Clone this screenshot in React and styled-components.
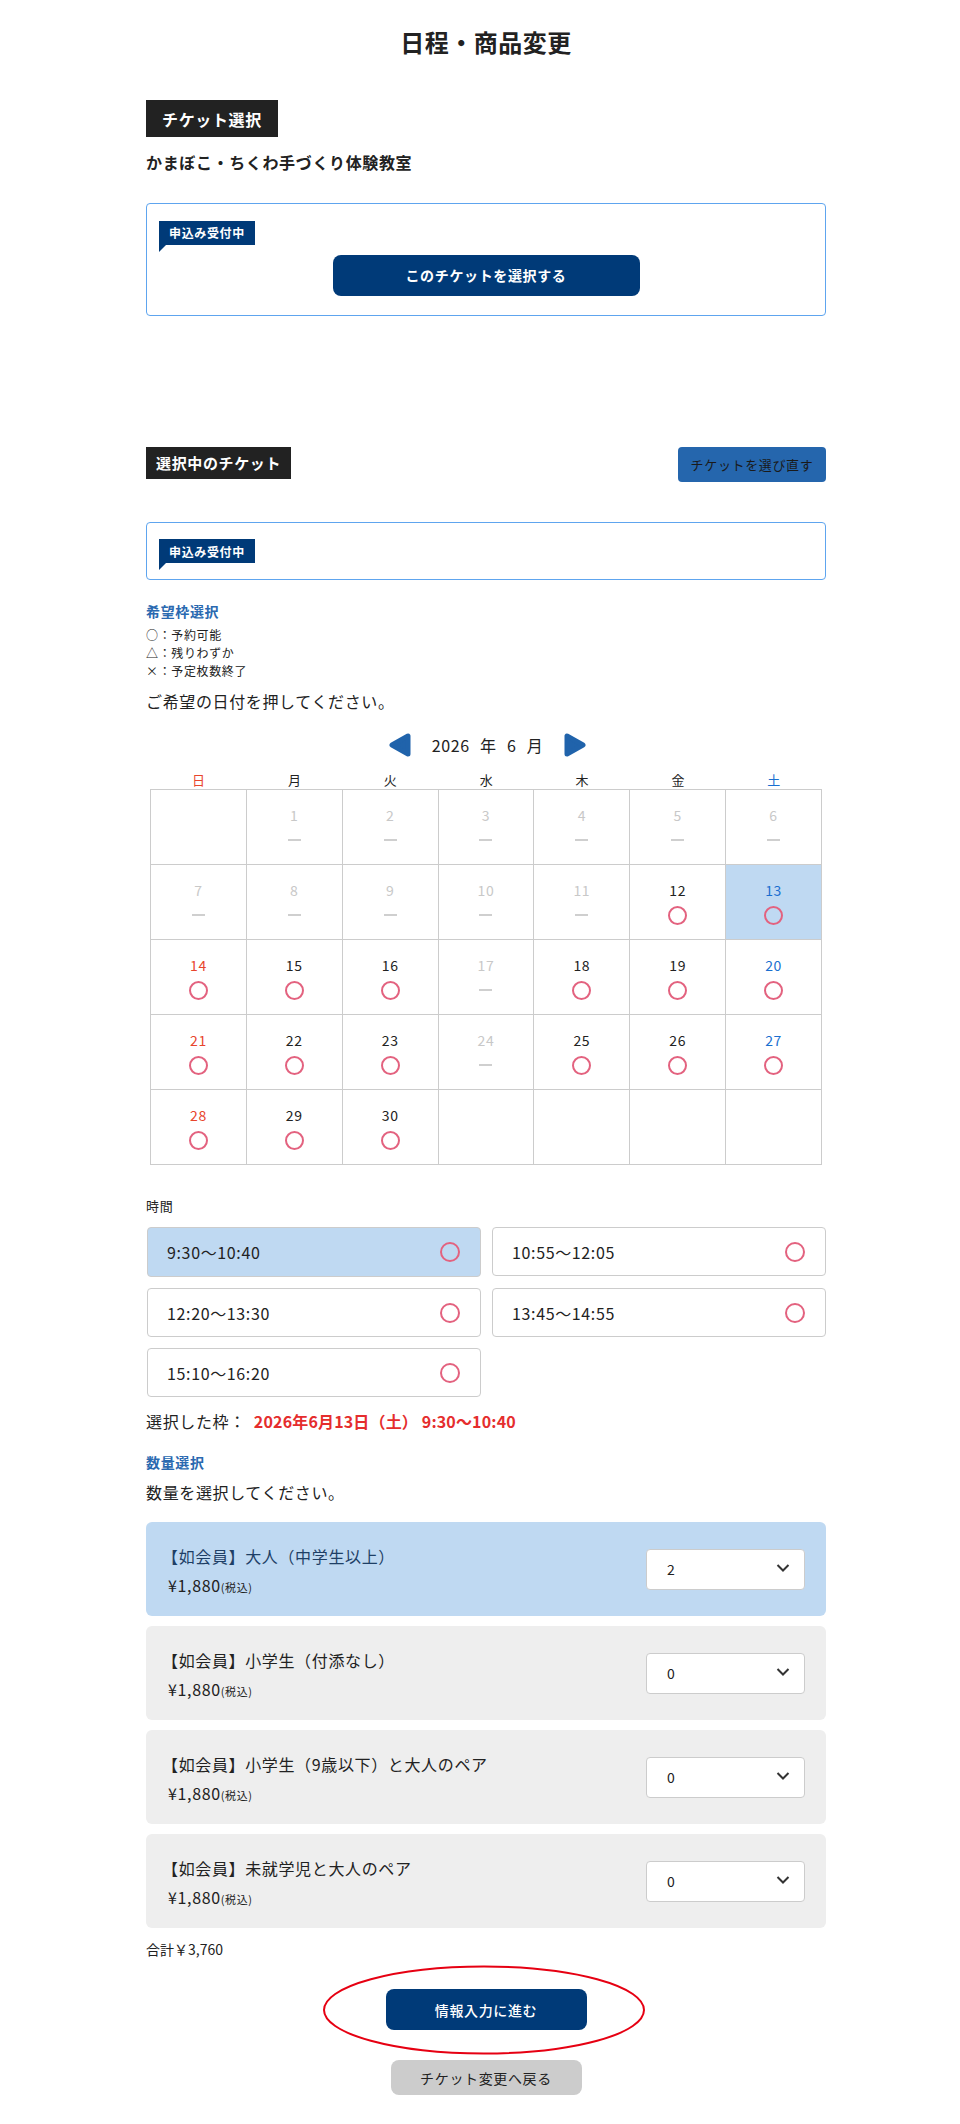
import React from "react";
import styled, { createGlobalStyle } from "styled-components";

const GlobalStyle = createGlobalStyle`
  html, body { margin: 0; padding: 0; background: #fff; }
  body {
    font-family: "Noto Sans CJK JP", "Noto Sans", sans-serif;
    color: #222;
    letter-spacing: 0.04em;
  }
  * { box-sizing: border-box; }
  button, select { letter-spacing: inherit; }
`;

const NAVY = "#003a78";
const SEL = "#bfd9f2";

const Page = styled.div`
  width: 960px;
  padding: 26px 134px 28px 146px;
`;

const Title = styled.h1`
  margin: 0;
  font-size: 24px;
  line-height: 32px;
  font-weight: 700;
  text-align: center;
  letter-spacing: 0.02em;
`;

const Label = styled.div`
  display: inline-flex;
  align-items: center;
  background: #222;
  color: #fff;
  font-weight: 700;
  height: ${(p) => (p.$small ? 32 : 37)}px;
  font-size: ${(p) => (p.$small ? 15 : 16)}px;
  padding: 0 ${(p) => (p.$small ? 10 : 16)}px;
`;

const TicketName = styled.div`
  margin-top: 13px;
  font-size: 16px;
  line-height: 24px;
  font-weight: 700;
`;

const TicketBox = styled.div`
  margin-top: ${(p) => p.$mt}px;
  border: 1px solid #5ea5ef;
  border-radius: 4px;
  padding: 15px 12px ${(p) => p.$pb}px;
`;

const Badge = styled.div`
  position: relative;
  display: inline-flex;
  align-items: center;
  height: 24px;
  padding: 0 10px;
  background: ${NAVY};
  color: #fff;
  font-size: 12px;
  font-weight: 700;
  &::after {
    content: "";
    position: absolute;
    left: 0;
    top: 24px;
    width: 0;
    height: 0;
    border-top: 7px solid ${NAVY};
    border-left: 7px solid transparent;
    transform: scaleX(-1);
  }
`;

const SelectTicketButton = styled.button`
  display: block;
  margin: 10px auto 0;
  width: 307px;
  height: 41px;
  border: none;
  border-radius: 8px;
  background: ${NAVY};
  color: #fff;
  font-family: inherit;
  font-size: 14px;
  font-weight: 700;
`;

const HeaderRow = styled.div`
  margin-top: 131px;
  display: flex;
  justify-content: space-between;
  align-items: flex-start;
`;

const ReselectButton = styled.button`
  width: 148px;
  height: 35px;
  border: none;
  border-radius: 4px;
  background: #2566ad;
  color: #1a1a1a;
  font-family: inherit;
  font-size: 13px;
  padding: 0;
`;

const SectionHead = styled.div`
  margin-top: ${(p) => p.$mt}px;
  font-size: 14px;
  line-height: 20px;
  font-weight: 700;
  color: #2a69b0;
`;

const Legend = styled.div`
  margin-top: 5px;
  font-size: 12px;
  line-height: 18px;
`;

const Lead = styled.div`
  margin-top: ${(p) => p.$mt}px;
  font-size: 16px;
  line-height: 24px;
`;

const MonthNav = styled.div`
  margin-top: 20px;
  height: 24px;
  display: flex;
  justify-content: center;
  align-items: center;
  gap: 21px;
  padding-left: 3px;
`;

const MonthText = styled.div`
  font-size: 16px;
  line-height: 24px;
  word-spacing: 6px;
`;

const Weekdays = styled.div`
  margin: 14px 4px 0;
  display: grid;
  grid-template-columns: repeat(7, 1fr);
  padding-left: 1px;
`;

const Weekday = styled.div`
  text-align: center;
  font-size: 13px;
  line-height: 18px;
  color: ${(p) => p.$color};
`;

const Grid = styled.div`
  margin: 0 4px;
  display: grid;
  grid-template-columns: repeat(7, 1fr);
  grid-auto-rows: 75px;
  border-top: 1px solid #ccc;
  border-left: 1px solid #ccc;
`;

const Cell = styled.div`
  border-right: 1px solid #ccc;
  border-bottom: 1px solid #ccc;
  background: ${(p) => (p.$selected ? SEL : "#fff")};
  display: flex;
  flex-direction: column;
  align-items: center;
  padding-top: 15px;
`;

const DayNum = styled.div`
  font-size: 14px;
  line-height: 20px;
  color: ${(p) => p.$color};
`;

const MarkSlot = styled.div`
  margin-top: 5px;
  height: 20px;
  display: flex;
  align-items: center;
  justify-content: center;
`;

const Circle = styled.div`
  width: ${(p) => p.$size || 19}px;
  height: ${(p) => p.$size || 19}px;
  border-radius: 50%;
  border: 2px solid #e3627f;
`;

const Dash = styled.div`
  width: 13px;
  height: 2px;
  background: #cfcfcf;
`;

const SmallHead = styled.div`
  margin-top: 32px;
  font-size: 13px;
  line-height: 18px;
`;

const Slots = styled.div`
  margin-top: 12px;
  display: grid;
  grid-template-columns: 1fr 1fr;
  gap: 11px;
  padding-left: 1px;
`;

const Slot = styled.div`
  height: ${(p) => (p.$tall ? 50 : 49)}px;
  border: 1px solid #ccc;
  border-radius: 4px;
  background: ${(p) => (p.$selected ? SEL : "#fff")};
  display: flex;
  align-items: center;
  justify-content: space-between;
  padding: 0 20px 0 19px;
  font-size: 16px;
`;

const Chosen = styled.div`
  margin-top: 12px;
  font-size: 16px;
  line-height: 24px;
`;

const ChosenValue = styled.span`
  margin-left: 8px;
  color: #e52d2d;
  font-weight: 700;
  letter-spacing: 0.01em;
`;

const Items = styled.div`
  margin-top: 18px;
  display: flex;
  flex-direction: column;
  gap: 10px;
`;

const Item = styled.div`
  height: 94px;
  border-radius: 6px;
  background: ${(p) => (p.$selected ? SEL : "#eeeeee")};
  display: flex;
  align-items: center;
  justify-content: space-between;
  padding: 0 21px 0 22px;
`;

const ItemInfo = styled.div`
  padding-top: 5px;
`;

const ItemName = styled.div`
  font-size: 16px;
  line-height: 24px;
  color: ${(p) => (p.$selected ? "#1e3f66" : "#222")};
  margin-left: -6px;
`;

const Price = styled.div`
  margin-top: 5px;
  font-size: 16px;
  line-height: 24px;
`;

const Tax = styled.span`
  font-size: 11px;
`;

const SelectWrap = styled.div`
  position: relative;
  width: 159px;
  height: 41px;
`;

const QtySelect = styled.select`
  appearance: none;
  width: 100%;
  height: 100%;
  border: 1px solid #ccc;
  border-radius: 4px;
  background: #fff;
  padding: 0 0 0 20px;
  font-family: inherit;
  font-size: 14px;
  color: #222;
`;

const Chevron = styled.svg`
  position: absolute;
  right: 15px;
  top: 14px;
  pointer-events: none;
`;

const Total = styled.div`
  margin-top: 11px;
  font-size: 14px;
  line-height: 20px;
  letter-spacing: 0;
`;

const ProceedArea = styled.div`
  position: relative;
  margin-top: 30px;
  display: flex;
  justify-content: center;
`;

const ProceedButton = styled.button`
  width: 201px;
  height: 41px;
  border: none;
  border-radius: 8px;
  background: ${NAVY};
  color: #fff;
  font-family: inherit;
  font-size: 14px;
  font-weight: 500;
`;

const Ellipse = styled.svg`
  position: absolute;
  left: 175px;
  top: -25px;
  pointer-events: none;
`;

const BackButton = styled.button`
  display: block;
  margin: 30px auto 0;
  width: 191px;
  height: 35px;
  border: none;
  border-radius: 8px;
  background: #ccc;
  color: #222;
  font-family: inherit;
  font-size: 14px;
`;

const Arrow = ({ dir }) => (
  <svg width="22" height="24" viewBox="0 0 22 24">
    <path
      d={dir === "left" ? "M19 3 L19 21 L3 12 Z" : "M3 3 L3 21 L19 12 Z"}
      fill="#2063ab"
      stroke="#2063ab"
      strokeWidth="5"
      strokeLinejoin="round"
    />
  </svg>
);

const RED = "#e8452c";
const BLUE = "#1a6fd0";
const GRAY = "#c8c8c8";

const weekdays = [
  ["日", RED],
  ["月", "#222"],
  ["火", "#222"],
  ["水", "#222"],
  ["木", "#222"],
  ["金", "#222"],
  ["土", BLUE],
];

const openDays = new Set([12, 13, 14, 15, 16, 18, 19, 20, 21, 22, 23, 25, 26, 27, 28, 29, 30]);

const cells = [];
for (let i = 0; i < 35; i++) {
  cells.push(i >= 1 && i <= 30 ? i : null); // June 2026 starts on Monday
}

const dayColor = (d, col) => {
  if (!openDays.has(d)) return GRAY;
  if (col === 0) return RED;
  if (col === 6) return BLUE;
  return "#222";
};

const slots = [
  { t: "9:30〜10:40", sel: true },
  { t: "10:55〜12:05" },
  { t: "12:20〜13:30" },
  { t: "13:45〜14:55" },
  { t: "15:10〜16:20" },
];

const items = [
  { name: "【如会員】大人（中学生以上）", qty: 2, sel: true },
  { name: "【如会員】小学生（付添なし）", qty: 0 },
  { name: "【如会員】小学生（9歳以下）と大人のペア", qty: 0 },
  { name: "【如会員】未就学児と大人のペア", qty: 0 },
];

export default function App() {
  return (
    <>
      <GlobalStyle />
      <Page>
        <Title>日程・商品変更</Title>
        <div style={{ height: 42 }} />
        <Label>チケット選択</Label>
        <TicketName>かまぼこ・ちくわ手づくり体験教室</TicketName>
        <TicketBox $mt={29} $pb={19}>
          <Badge>申込み受付中</Badge>
          <SelectTicketButton>このチケットを選択する</SelectTicketButton>
        </TicketBox>

        <HeaderRow>
          <Label $small>選択中のチケット</Label>
          <ReselectButton>チケットを選び直す</ReselectButton>
        </HeaderRow>
        <TicketBox $mt={40} $pb={16}>
          <Badge>申込み受付中</Badge>
        </TicketBox>

        <SectionHead $mt={21}>希望枠選択</SectionHead>
        <Legend>
          <div>○：予約可能</div>
          <div>△：残りわずか</div>
          <div>×：予定枚数終了</div>
        </Legend>
        <Lead $mt={9}>ご希望の日付を押してください。</Lead>

        <MonthNav>
          <Arrow dir="left" />
          <MonthText>2026 年 6 月</MonthText>
          <Arrow dir="right" />
        </MonthNav>

        <Weekdays>
          {weekdays.map(([w, c]) => (
            <Weekday key={w} $color={c}>
              {w}
            </Weekday>
          ))}
        </Weekdays>
        <Grid>
          {cells.map((d, i) => {
            const col = i % 7;
            return (
              <Cell key={i} $selected={d === 13}>
                {d && (
                  <>
                    <DayNum $color={dayColor(d, col)}>{d}</DayNum>
                    <MarkSlot>{openDays.has(d) ? <Circle /> : <Dash />}</MarkSlot>
                  </>
                )}
              </Cell>
            );
          })}
        </Grid>

        <SmallHead>時間</SmallHead>
        <Slots>
          {slots.map((s, i) => (
            <Slot key={s.t} $selected={s.sel} $tall={i === 0}>
              <span>{s.t}</span>
              <Circle $size={20} />
            </Slot>
          ))}
        </Slots>
        <Chosen>
          選択した枠：<ChosenValue>2026年6月13日（土） 9:30〜10:40</ChosenValue>
        </Chosen>

        <SectionHead $mt={19}>数量選択</SectionHead>
        <Lead $mt={8}>数量を選択してください。</Lead>
        <Items>
          {items.map((it) => (
            <Item key={it.name} $selected={it.sel}>
              <ItemInfo>
                <ItemName $selected={it.sel}>{it.name}</ItemName>
                <Price>
                  ¥1,880<Tax>(税込)</Tax>
                </Price>
              </ItemInfo>
              <SelectWrap>
                <QtySelect defaultValue={String(it.qty)}>
                  {[0, 1, 2, 3, 4, 5].map((n) => (
                    <option key={n} value={n}>
                      {n}
                    </option>
                  ))}
                </QtySelect>
                <Chevron width="14" height="10" viewBox="0 0 14 10">
                  <path d="M1.5 2 L7 7.5 L12.5 2" fill="none" stroke="#333" strokeWidth="2" />
                </Chevron>
              </SelectWrap>
            </Item>
          ))}
        </Items>
        <Total>合計￥3,760</Total>

        <ProceedArea>
          <ProceedButton>情報入力に進む</ProceedButton>
          <Ellipse width="326" height="92" viewBox="0 0 326 92">
            <ellipse cx="163" cy="46" rx="160" ry="43.5" fill="none" stroke="#e60012" strokeWidth="2" />
          </Ellipse>
        </ProceedArea>
        <BackButton>チケット変更へ戻る</BackButton>
      </Page>
    </>
  );
}
